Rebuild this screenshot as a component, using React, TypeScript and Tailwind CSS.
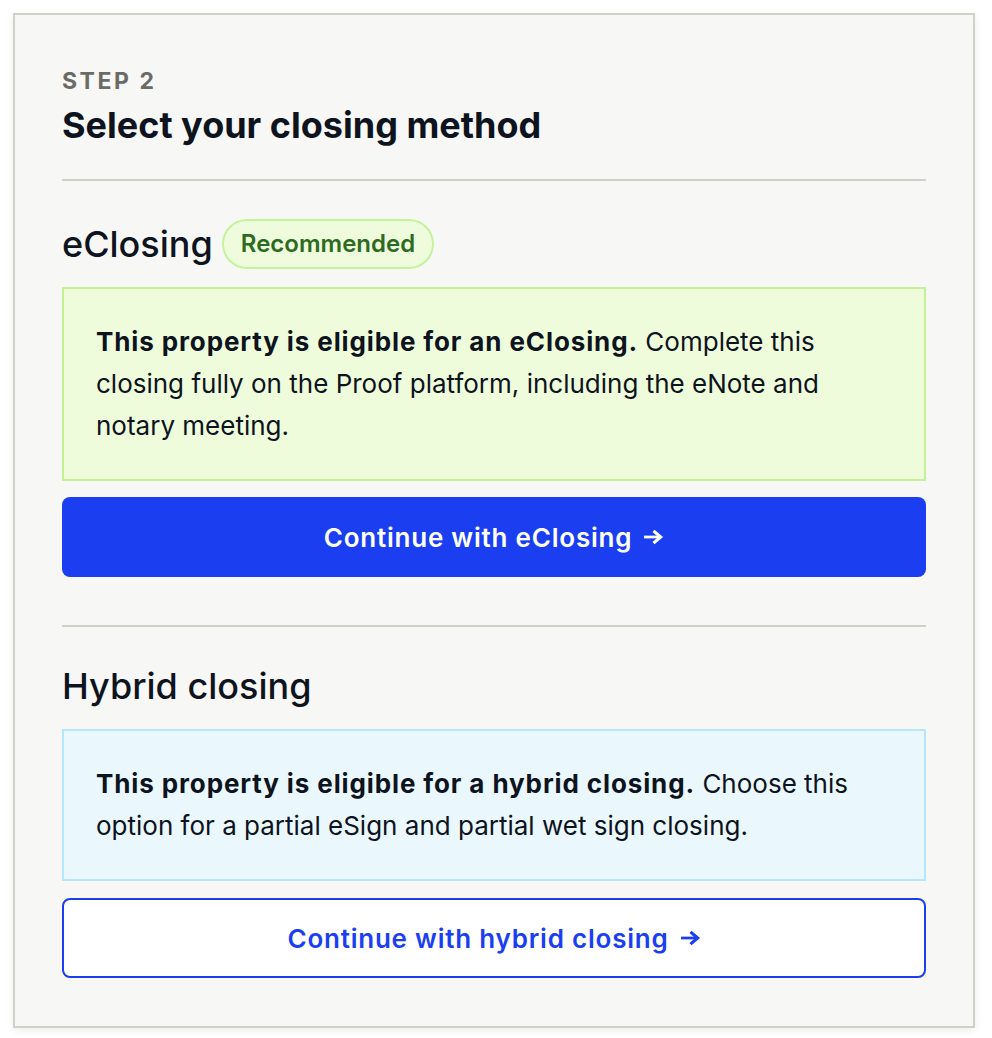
function Arrow() {
  return (
    <svg className="ml-[11px] h-[18px] w-[21px] shrink-0" viewBox="0 0 20 16" fill="none" stroke="currentColor">
      <path d="M1 8h15" strokeWidth={2.6} />
      <path d="M10 2.2 16.8 8 10 13.8" strokeWidth={3} strokeLinejoin="miter" />
    </svg>
  )
}

export default function App() {
  return (
    <div className="min-h-screen bg-white pt-[13px] pl-[13px] font-['Inter',sans-serif] text-[#0e1320]">
      <div className="w-[962px] border-2 border-[#d0d0c8] bg-[#f7f7f5] px-[47px] pt-[50px] pb-[48px] shadow-[0_2px_8px_rgba(0,0,0,0.08)]">
        <div className="text-[23px] font-bold uppercase leading-[32px] tracking-[0.11em] text-[#6b6b66]">Step 2</div>
        <h1 className="mt-[6px] text-[36px] font-bold leading-[44px]">Select your closing method</h1>

        <div className="mt-[32px] h-[2px] bg-[#d0d0c8]" />

        <div className="mt-[38px] flex items-center gap-[9px]">
          <h2 className="text-[36px] font-medium leading-[44px]">eClosing</h2>
          <span className="rounded-full border-2 border-[#c5f29c] bg-[#eefcdd] px-[17px] py-[8px] text-[24px] font-semibold leading-[30px] text-[#2f6a22]">
            Recommended
          </span>
        </div>

        <div className="mt-[18px] border-2 border-[#c2f293] bg-[#eefcdc] p-8 text-[26px] leading-[42px]">
          <span className="font-bold tracking-[0.034em]">This property is eligible for an eClosing.</span> Complete this
          closing fully on the Proof platform, including the eNote and notary meeting.
        </div>

        <button
          type="button"
          className="mt-[16px] flex h-[80px] w-full items-center justify-center rounded-[8px] bg-[#1b3ff0] text-[26px] font-semibold tracking-[0.03em] text-white"
        >
          Continue with eClosing
          <Arrow />
        </button>

        <div className="mt-[48px] h-[2px] bg-[#d0d0c8]" />

        <h2 className="mt-[34px] text-[36px] font-medium leading-[50px]">Hybrid closing</h2>

        <div className="mt-[18px] border-2 border-[#b5e6f9] bg-[#eaf7fd] p-8 text-[26px] leading-[42px]">
          <span className="font-bold tracking-[0.034em]">This property is eligible for a hybrid closing.</span> Choose
          this option for a partial eSign and partial wet sign closing.
        </div>

        <button
          type="button"
          className="mt-[17px] flex h-[80px] w-full items-center justify-center rounded-[8px] border-2 border-[#1b3ff0] bg-white text-[26px] font-semibold tracking-[0.03em] text-[#1b3ff0]"
        >
          Continue with hybrid closing
          <Arrow />
        </button>
      </div>
    </div>
  )
}
